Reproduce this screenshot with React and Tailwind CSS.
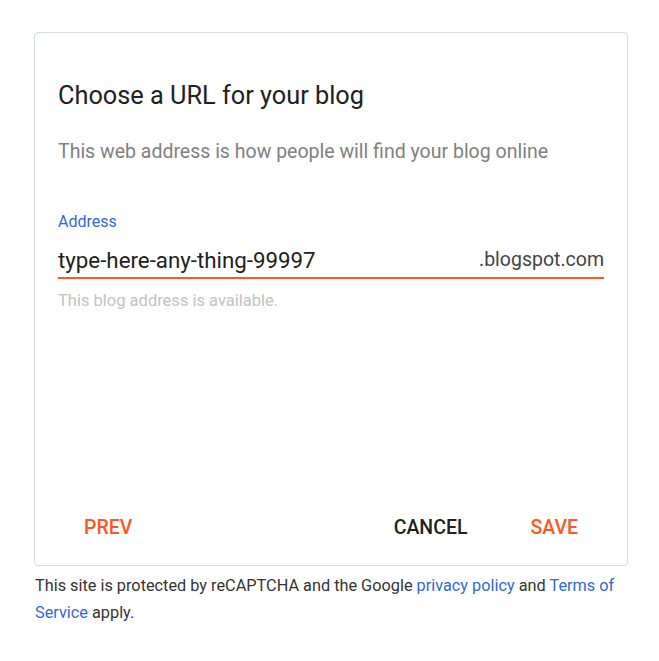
import React, { useState } from "react";

export default function App() {
  const [url, setUrl] = useState("type-here-any-thing-99997");

  return (
    <div className="min-h-screen bg-white font-['Roboto',sans-serif] px-[34px] pt-[32px]">
      {/* Card */}
      <div className="w-[594px] h-[534px] border border-[#d3dbe0] rounded-[4px] px-[23px] pt-[48px] pb-[19px] flex flex-col">
        <h2 className="text-[25.3px] leading-[30px] text-[#212121]">Choose a URL for your blog</h2>
        <p className="mt-[29px] text-[19.5px] leading-[24px] text-[#808080]">
          This web address is how people will find your blog online
        </p>

        <label className="mt-[48px] text-[16px] leading-[20px] text-[#3367d6]">Address</label>
        <div className="mt-[14px] flex items-end border-b-2 border-[#ff5722] pb-[3px]">
          <input
            value={url}
            onChange={(e) => setUrl(e.target.value)}
            className="flex-1 min-w-0 outline-none text-[22.3px] leading-[28px] text-[#212121] bg-transparent p-0"
          />
          <span className="text-[19.5px] leading-[28px] text-[#444]">.blogspot.com</span>
        </div>
        <p className="mt-[12px] text-[16.5px] leading-[20px] text-[#c2c2c2]">This blog address is available.</p>

        <div className="mt-auto flex items-center">
          <button className="px-[26px] h-[36px] text-[19.5px] font-medium text-[#ff5722]">PREV</button>
          <div className="flex-1" />
          <button className="px-[26px] h-[36px] text-[19.5px] font-medium text-[#212121]">CANCEL</button>
          <button className="ml-[11px] px-[26px] h-[36px] text-[19.5px] font-medium text-[#ff5722]">SAVE</button>
        </div>
      </div>

      <p className="mt-[6px] ml-[1px] w-[594px] text-[16.3px] leading-[27px] text-[#333]">
        This site is protected by reCAPTCHA and the Google{" "}
        <a className="text-[#3367d6]">privacy policy</a> and{" "}
        <a className="text-[#3367d6]">Terms of Service</a> apply.
      </p>
    </div>
  );
}
